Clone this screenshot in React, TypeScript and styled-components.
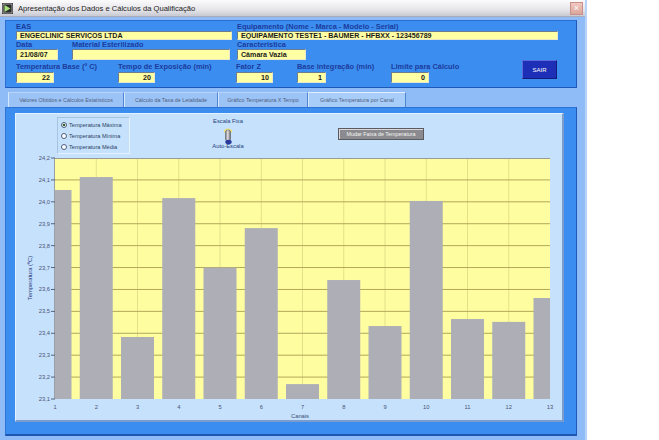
import React from "react";
import styled, { createGlobalStyle } from "styled-components";

const Global = createGlobalStyle`
  html, body { margin: 0; padding: 0; background: #ffffff; }
  body { font-family: "Liberation Sans", Arial, sans-serif; }
  #root { width: 659px; height: 440px; overflow: hidden; }
`;

const Window = styled.div`
  width: 587px;
  height: 440px;
  background: #8fbcf7;
  display: flex;
  flex-direction: column;
  box-sizing: border-box;
  border-right: 2px solid #b6d3fa;
`;

const TitleBar = styled.div`
  height: 17px;
  flex: none;
  display: flex;
  align-items: center;
  padding: 0 2px 0 2px;
  gap: 5px;
  background: linear-gradient(#fbfbfc, #e6e6ea 60%, #c9cad2);
  border-bottom: 1px solid #a9abb8;
  box-sizing: border-box;
`;

const TitleText = styled.span`
  font-size: 7.6px;
  color: #1c1c1c;
  white-space: nowrap;
`;

const CloseBtn = styled.div`
  margin-left: auto;
  width: 11px;
  height: 11px;
  background: linear-gradient(#f1c8c0, #dba69c);
  border: 1px solid #c89088;
  color: #fff;
  font-size: 9px;
  line-height: 10px;
  text-align: center;
`;

const Body = styled.div`
  flex: 1;
  display: flex;
  flex-direction: column;
  padding: 3px 8px 0 5px;
`;

const HeaderPanel = styled.div`
  height: 68px;
  box-sizing: border-box;
  background: #3b8ef0;
  border: 1px solid #2b6fd2;
  border-right-color: #2058b8;
  border-bottom-color: #2058b8;
  padding: 2px 0 0 10px;
  display: flex;
  flex-direction: column;
`;

const Row = styled.div<{ $mt?: number }>`
  display: flex;
  align-items: flex-start;
  margin-top: ${(p) => p.$mt ?? 0}px;
`;

const Group = styled.div<{ $w?: number }>`
  width: ${(p) => (p.$w ? `${p.$w}px` : "auto")};
  flex: none;
  display: flex;
  flex-direction: column;
`;

const Label = styled.div<{ $lh?: number }>`
  font-size: 7.4px;
  font-weight: bold;
  line-height: ${(p) => p.$lh ?? 8}px;
  color: #1b3b9c;
  white-space: nowrap;
`;

const Field = styled.div<{ $w: number; $h: number; $right?: boolean; $mt?: number }>`
  width: ${(p) => p.$w}px;
  height: ${(p) => p.$h}px;
  margin-top: ${(p) => p.$mt ?? 0}px;
  box-sizing: border-box;
  background: #ffffa4;
  border-top: 1px solid #6d7c8e;
  border-left: 1px solid #6d7c8e;
  border-right: 1px solid #e8e8c8;
  border-bottom: 1px solid #e8e8c8;
  font-size: 7.1px;
  font-weight: bold;
  color: #1a1a1a;
  padding: 0 3px;
  display: flex;
  align-items: center;
  justify-content: ${(p) => (p.$right ? "flex-end" : "flex-start")};
  white-space: nowrap;
  overflow: hidden;
`;

const ExitButton = styled.div`
  width: 35px;
  height: 19px;
  margin-top: -2px;
  box-sizing: border-box;
  background: #1d2fb6;
  border: 1px solid #121c7a;
  border-top-color: #5a6ad8;
  border-left-color: #5a6ad8;
  color: #ffffff;
  font-size: 6px;
  display: flex;
  align-items: center;
  justify-content: center;
`;

const TabStrip = styled.div`
  display: flex;
  height: 15px;
  margin-top: 4px;
  flex: none;
`;

const Tab = styled.div<{ $w: number; $active?: boolean }>`
  width: ${(p) => p.$w}px;
  box-sizing: border-box;
  background: ${(p) => (p.$active ? "#a9cdf9" : "#9cc3f5")};
  border-top: 1px solid ${(p) => (p.$active ? "#e2efff" : "#b8d6fb")};
  border-left: 1px solid #d6e7fd;
  border-right: 1px solid #4f86d4;
  font-size: 5.4px;
  color: #4f5f82;
  display: flex;
  align-items: center;
  justify-content: center;
  white-space: nowrap;
`;

const TabGap = styled.div`
  width: 3px;
`;

const TabPanel = styled.div`
  height: 329px;
  box-sizing: border-box;
  background: #3b8ef0;
  border: 1px solid #2e74d6;
  border-right-color: #2058b8;
  border-bottom: 2px solid #1f56b4;
  padding: 5px 12px 12px 9px;
  display: flex;
`;

const ChartCard = styled.div`
  flex: 1;
  box-sizing: border-box;
  background: #c5e1fc;
  border-top: 1px solid #e4f1ff;
  border-left: 1px solid #e4f1ff;
  border-right: 2px solid #7b9ccc;
  border-bottom: 2px solid #7b9ccc;
  display: flex;
  flex-direction: column;
`;

const Controls = styled.div`
  height: 43px;
  flex: none;
  display: flex;
  align-items: flex-start;
  padding-top: 3px;
  box-sizing: border-box;
`;

const RadioBox = styled.div`
  margin-left: 41px;
  width: 73px;
  height: 37px;
  box-sizing: border-box;
  border: 1px solid #a6c3e4;
  border-right-color: #e6f2ff;
  border-bottom-color: #e6f2ff;
  display: flex;
  flex-direction: column;
  justify-content: space-around;
  padding: 1px 0 1px 3px;
`;

const RadioItem = styled.div`
  display: flex;
  align-items: center;
  gap: 2px;
  font-size: 5.6px;
  color: #2c3c62;
  white-space: nowrap;
`;

const RadioDot = styled.span<{ $on?: boolean }>`
  width: 6px;
  height: 6px;
  box-sizing: border-box;
  border-radius: 50%;
  border: 1px solid #4e5f80;
  background: ${(p) => (p.$on ? "radial-gradient(circle, #2f5a2f 0 1.4px, #ffffff 1.6px)" : "#ffffff")};
  flex: none;
`;

const ToggleArea = styled.div`
  margin-left: 78px;
  width: 40px;
  display: flex;
  flex-direction: column;
  align-items: center;
`;

const SmallText = styled.div`
  font-size: 5.8px;
  line-height: 8px;
  color: #27407c;
  white-space: nowrap;
`;

const ToggleIcon = styled.svg`
  margin-top: 4px;
  display: block;
  overflow: visible;
`;

const GrayButton = styled.div`
  margin-left: 90px;
  margin-top: 11px;
  width: 86px;
  height: 12px;
  box-sizing: border-box;
  background: #8b8b8f;
  border: 1px solid #5a5a60;
  box-shadow: inset 1px 1px 0 #d8d8dc;
  color: #f4f4f4;
  font-size: 5.4px;
  display: flex;
  align-items: center;
  justify-content: center;
  white-space: nowrap;
`;

const ChartSvg = styled.svg`
  display: block;
  flex: none;
  overflow: visible;
`;

const values = [24.054, 24.113, 23.383, 24.017, 23.7, 23.88, 23.168, 23.643, 23.433, 24.004, 23.465, 23.452, 23.561];

const PL = 39;
const PR = 534;
const PT = 1;
const PB = 242;
const YMIN = 23.1;
const YMAX = 24.2;
const step = (PR - PL) / 12;
const yOf = (v: number) => PT + ((YMAX - v) / (YMAX - YMIN)) * (PB - PT);
const xOf = (i: number) => PL + i * step;

function Chart() {
  const yTicks = Array.from({ length: 12 }, (_, i) => +(23.1 + i * 0.1).toFixed(1));
  return (
    <ChartSvg width={545} height={263} viewBox="0 0 545 263">
      <defs>
        <clipPath id="plotClip">
          <rect x={PL} y={PT} width={PR - PL} height={PB - PT} />
        </clipPath>
      </defs>
      <rect x={PL} y={PT} width={PR - PL} height={PB - PT} fill="#fefea0" />
      {values.map((_, i) =>
        i > 0 && i < 12 ? (
          <line key={"v" + i} x1={xOf(i)} x2={xOf(i)} y1={PT} y2={PB} stroke="#e4e08a" strokeWidth={1} />
        ) : null
      )}
      {yTicks.map((t) =>
        t > 23.1 && t < 24.2 ? (
          <line key={"h" + t} x1={PL} x2={PR} y1={yOf(t)} y2={yOf(t)} stroke="#b3a75a" strokeWidth={1} />
        ) : null
      )}
      <g clipPath="url(#plotClip)">
        {values.map((v, i) => (
          <rect key={"b" + i} x={xOf(i) - 16.5} y={yOf(v)} width={33} height={PB - yOf(v)} fill="#aeaeb6" />
        ))}
      </g>
      <line x1={PL} x2={PR} y1={PT + 0.5} y2={PT + 0.5} stroke="#9a9a9a" strokeWidth={1} />
      <line x1={PL - 0.5} x2={PL - 0.5} y1={PT} y2={PB} stroke="#9aa0a8" strokeWidth={1} />
      {yTicks.map((t) => (
        <g key={"yt" + t}>
          <line x1={PL - 4} x2={PL} y1={yOf(t)} y2={yOf(t)} stroke="#5a6078" strokeWidth={1} />
          <text x={PL - 5} y={yOf(t) + 2} fontSize={5.8} fill="#4c5474" textAnchor="end" fontFamily="Liberation Sans, Arial, sans-serif">
            {t.toFixed(1).replace(".", ",")}
          </text>
        </g>
      ))}
      {values.map((_, i) => (
        <text key={"xt" + i} x={xOf(i)} y={252} fontSize={5.8} fill="#4c5474" textAnchor="middle" fontFamily="Liberation Sans, Arial, sans-serif">
          {i + 1}
        </text>
      ))}
      <text x={284} y={261} fontSize={5.8} fill="#3c4a74" textAnchor="middle" fontFamily="Liberation Sans, Arial, sans-serif">
        Canais
      </text>
      <text
        x={0}
        y={0}
        transform="translate(16 121) rotate(-90)"
        fontSize={5.8}
        fill="#2a3c7c"
        textAnchor="middle"
        fontFamily="Liberation Sans, Arial, sans-serif"
      >
        Temperatura (ºC)
      </text>
    </ChartSvg>
  );
}

function Toggle() {
  return (
    <ToggleIcon width={8} height={13} viewBox="0 0 8 13">
      <defs>
        <linearGradient id="tg" x1="0" x2="1" y1="0" y2="0">
          <stop offset="0" stopColor="#6d6d72" />
          <stop offset="0.45" stopColor="#e4e4e8" />
          <stop offset="1" stopColor="#5d5d64" />
        </linearGradient>
      </defs>
      <ellipse cx={4} cy={2} rx={4} ry={2.6} fill="#f6e46a" opacity={0.85} />
      <rect x={1.5} y={1} width={5} height={11} rx={2} fill="url(#tg)" stroke="#55555c" strokeWidth={0.5} />
      <ellipse cx={4.5} cy={13} rx={3.2} ry={2.2} fill="#2a3a9c" />
    </ToggleIcon>
  );
}

export default function App() {
  return (
    <>
      <Global />
      <Window>
        <TitleBar>
          <svg width={11} height={11} viewBox="0 0 11 11">
            <rect x={0} y={0} width={11} height={11} fill="#2c2c2c" />
            <polygon points="2.5,2 8.5,5.5 2.5,9" fill="#a6e07a" />
            <rect x={1} y={1} width={9} height={9} fill="none" stroke="#e8e8e8" strokeWidth={0.6} />
          </svg>
          <TitleText>Apresentação dos Dados e Cálculos da Qualificação</TitleText>
          <CloseBtn>×</CloseBtn>
        </TitleBar>
        <Body>
          <HeaderPanel>
            <Row>
              <Group $w={221}>
                <Label>EAS</Label>
                <Field $w={216} $h={9}>ENGECLINIC SERVIÇOS LTDA</Field>
              </Group>
              <Group>
                <Label>Equipamento (Nome - Marca - Modelo - Serial)</Label>
                <Field $w={321} $h={9}>EQUIPAMENTO TESTE1 - BAUMER - HFBXX - 123456789</Field>
              </Group>
            </Row>
            <Row>
              <Group $w={56}>
                <Label $lh={9}>Data</Label>
                <Field $w={42} $h={11}>21/08/07</Field>
              </Group>
              <Group $w={165}>
                <Label $lh={9}>Material Esterilizado</Label>
                <Field $w={158} $h={11}></Field>
              </Group>
              <Group>
                <Label $lh={9}>Caracteristica</Label>
                <Field $w={69} $h={11}>Câmara Vazia</Field>
              </Group>
            </Row>
            <Row $mt={2}>
              <Group $w={102}>
                <Label $lh={9}>Temperatura Base (º C)</Label>
                <Field $w={38} $h={11} $mt={1} $right>22</Field>
              </Group>
              <Group $w={118}>
                <Label $lh={9}>Tempo de Exposição (min)</Label>
                <Field $w={37} $h={11} $mt={1} $right>20</Field>
              </Group>
              <Group $w={61}>
                <Label $lh={9}>Fator Z</Label>
                <Field $w={37} $h={11} $mt={1} $right>10</Field>
              </Group>
              <Group $w={94}>
                <Label $lh={9}>Base integração (min)</Label>
                <Field $w={29} $h={11} $mt={1} $right>1</Field>
              </Group>
              <Group $w={131}>
                <Label $lh={9}>Limite para Cálculo</Label>
                <Field $w={38} $h={11} $mt={1} $right>0</Field>
              </Group>
              <ExitButton>SAIR</ExitButton>
            </Row>
          </HeaderPanel>
          <TabStrip>
            <TabGap />
            <Tab $w={116}>Valores Obtidos e Cálculos Estatísticos</Tab>
            <Tab $w={94}>Cálculo da Taxa de Letalidade</Tab>
            <Tab $w={90}>Gráfico Temperatura X Tempo</Tab>
            <Tab $w={98} $active>Gráfico Temperatura por Canal</Tab>
          </TabStrip>
          <TabPanel>
            <ChartCard>
              <Controls>
                <RadioBox>
                  <RadioItem>
                    <RadioDot $on />
                    Temperatura Máxima
                  </RadioItem>
                  <RadioItem>
                    <RadioDot />
                    Temperatura Mínima
                  </RadioItem>
                  <RadioItem>
                    <RadioDot />
                    Temperatura Média
                  </RadioItem>
                </RadioBox>
                <ToggleArea>
                  <SmallText>Escala Fixa</SmallText>
                  <Toggle />
                  <SmallText>Auto-Escala</SmallText>
                </ToggleArea>
                <GrayButton>Mudar Faixa de Temperatura</GrayButton>
              </Controls>
              <Chart />
            </ChartCard>
          </TabPanel>
        </Body>
      </Window>
    </>
  );
}
